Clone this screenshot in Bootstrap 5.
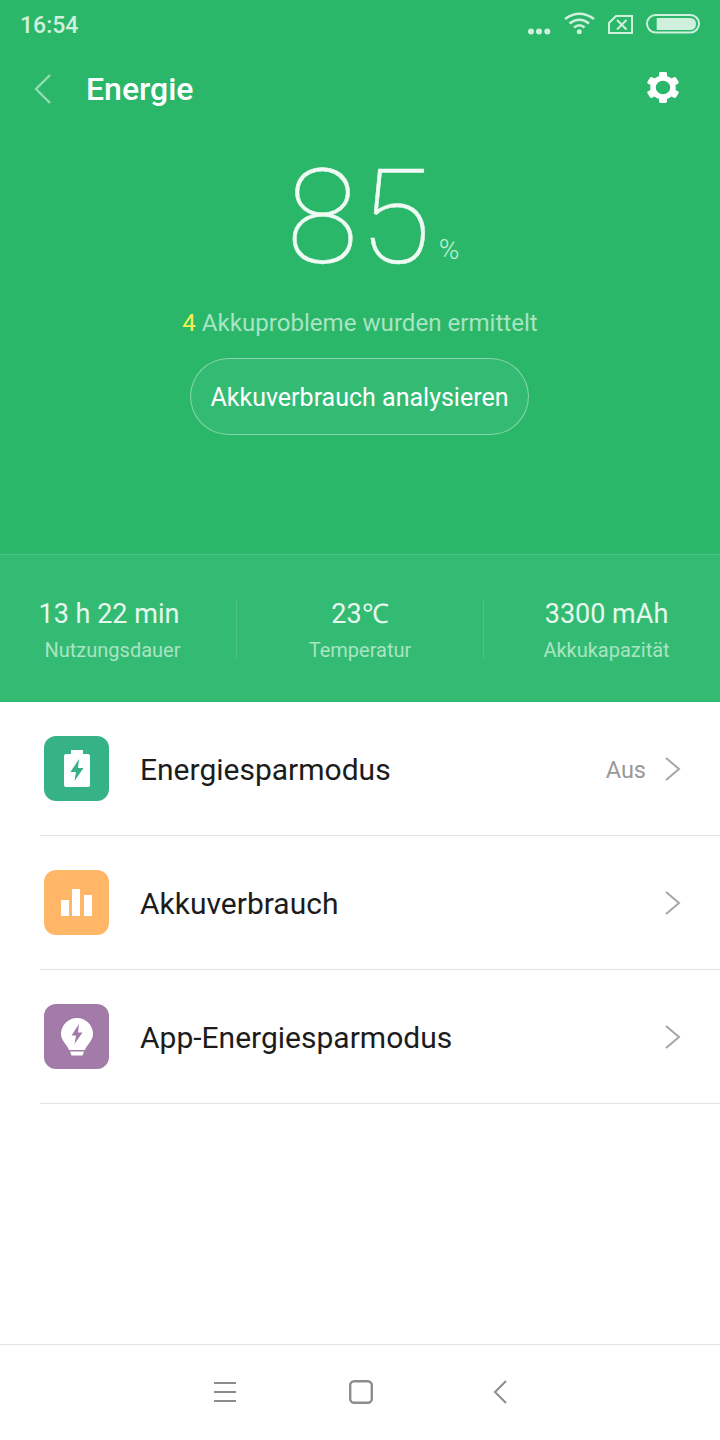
<!doctype html>
<html lang="de">
<head>
    <meta charset="utf-8">
    <title>Energie</title>
    <link href="https://cdn.jsdelivr.net/npm/bootstrap@5.3.3/dist/css/bootstrap.min.css" rel="stylesheet">
    <style>
        body {
            width: 720px;
            height: 1440px;
            overflow: hidden;
            background-color: #fff;
            font-family: Roboto, "Liberation Sans", sans-serif;
        }
        .hero {
            height: 554px;
            background-color: #2ab769;
            color: #fff;
        }
        .status-bar {
            height: 50px;
            padding: 0 20px 0 20px;
        }
        .status-time {
            font-size: 23px;
            font-weight: 500;
            color: #d0f0de;
            margin-top: 2px;
        }
        .title-bar {
            height: 78px;
            padding: 0 40px 0 33px;
        }
        .page-title {
            font-size: 32px;
            font-weight: 500;
            margin-left: 33px;
        }
        .gear-icon {
            margin-top: -3px;
        }
        .level-row {
            height: 162px;
            padding-left: 26px;
        }
        .level-num {
            font-size: 131px;
            font-weight: 100;
            line-height: 142px;
            letter-spacing: 1px;
            margin-bottom: 1px;
            color: #eefaf3;
            -webkit-text-stroke: .5px #eefaf3;
        }
        .level-unit {
            font-size: 28px;
            font-weight: 300;
            color: #c4eed6;
            margin-left: 7px;
            margin-bottom: 19px;
        }
        .problems {
            margin-top: 17px;
            font-size: 24.1px;
            line-height: 32px;
            color: #a9e4c3;
        }
        .problems b {
            font-weight: 400;
            color: #f5f04f;
        }
        .analyze-btn {
            display: block;
            width: 339px;
            height: 77px;
            margin: 19px 0 0 190px;
            padding: 2px 0 0;
            border: 1px solid rgba(255, 255, 255, .4);
            border-radius: 39px;
            background-color: #34bb73;
            color: #fff;
            font-size: 25px;
        }
        .stats {
            height: 148px;
            background-color: #34bb73;
            border-top: 1px solid #4ac384;
            color: #e6f8ee;
        }
        .stat-cell {
            height: 60px;
            line-height: 1;
        }
        .stat-first { width: 237px; padding-right: 18px; border-right: 1px solid #4ac384; }
        .stat-first .stat-label { padding-left: 7px; }
        .stat-mid { width: 247px; border-right: 1px solid #4ac384; }
        .stat-last { width: 236px; padding-left: 9px; }
        .stat-value {
            font-size: 27px;
            line-height: 30px;
        }
        .stat-label {
            font-size: 20px;
            line-height: 26px;
            margin-top: 8px;
            color: #a9e4c3;
        }
        .menu-row {
            height: 134px;
            margin-left: 40px;
            border-bottom: 1px solid #e3e3e3;
            padding-right: 39px;
        }
        .menu-icon {
            width: 65px;
            height: 65px;
            margin-left: 4px;
            margin-right: 31px;
            border-radius: 12px;
        }
        .icon-green { background-color: #36b386; }
        .icon-orange { background-color: #ffb767; }
        .icon-purple { background-color: #a27ba9; }
        .menu-label {
            font-size: 30px;
            color: #1c1c1c;
            padding-top: 2px;
        }
        .menu-value {
            font-size: 23.5px;
            color: #999;
            margin-right: 19px;
            padding-top: 4px;
        }
        .spacer {
            flex: 1;
        }
        .nav-bottom {
            height: 96px;
            border-top: 1px solid #e3e3e3;
            padding-left: 213px;
            padding-bottom: 2px;
            gap: 112px;
        }
        .nav-back {
            margin-left: 8px;
        }
    </style>
</head>
<body class="d-flex flex-column">

<div class="hero">
    <div class="status-bar d-flex justify-content-between align-items-center">
        <span class="status-time">16:54</span>
        <svg width="174" height="26" viewBox="0 0 174 26" fill="none" stroke="#d0f0de">
            <circle cx="5" cy="19.500" r="3" fill="#d0f0de" stroke="none"/>
            <circle cx="13" cy="19.500" r="3" fill="#d0f0de" stroke="none"/>
            <circle cx="21.300" cy="19.500" r="3" fill="#d0f0de" stroke="none"/>
            <path d="M39 7 Q53.500 -3.500 68 7 M43.500 11.500 Q53.500 4 63 11.500 M48 15.500 Q53.500 11 58.500 15.500" stroke-width="2.600"/>
            <circle cx="53.300" cy="19.700" r="2.500" fill="#d0f0de" stroke="none"/>
            <path d="M83 11 L90 4 H106 V21 H83 Z" stroke-width="2"/>
            <path d="M91 8 L100.500 17.500 M100.500 8 L91 17.500" stroke-width="2"/>
            <rect x="121" y="3" width="52" height="17.500" rx="8.700" stroke-width="2"/>
            <path d="M130.700 6 H164 Q170 6 170 12 Q170 18 164 18 H130.700 Z" fill="#d0f0de" stroke="none"/>
        </svg>
    </div>
    <div class="title-bar d-flex align-items-center">
        <svg width="20" height="32" viewBox="0 0 20 32" fill="none" stroke="#92dcb4" stroke-width="2.400">
            <path d="M17 2 L3 16 L17 30"/>
        </svg>
        <span class="page-title flex-grow-1">Energie</span>
        <svg class="gear-icon" width="34" height="31" viewBox="0 0 34 33" preserveAspectRatio="none">
            <circle cx="17" cy="16.500" r="10" fill="none" stroke="#fff" stroke-width="5.500"/>
            <g fill="#fff">
                <rect x="13" y="0" width="8" height="6" rx="1.500"/>
                <rect x="13" y="0" width="8" height="6" rx="1.500" transform="rotate(60 17 16.500)"/>
                <rect x="13" y="0" width="8" height="6" rx="1.500" transform="rotate(120 17 16.500)"/>
                <rect x="13" y="0" width="8" height="6" rx="1.500" transform="rotate(180 17 16.500)"/>
                <rect x="13" y="0" width="8" height="6" rx="1.500" transform="rotate(240 17 16.500)"/>
                <rect x="13" y="0" width="8" height="6" rx="1.500" transform="rotate(300 17 16.500)"/>
            </g>
        </svg>
    </div>
    <div class="level-row d-flex justify-content-center align-items-end">
        <span class="level-num">85</span>
        <span class="level-unit">%</span>
    </div>
    <div class="problems text-center"><b>4</b> Akkuprobleme wurden ermittelt</div>
    <button type="button" class="analyze-btn">Akkuverbrauch analysieren</button>
</div>

<div class="stats d-flex align-items-center">
    <div class="stat-cell stat-first text-center">
        <div class="stat-value">13 h 22 min</div>
        <div class="stat-label">Nutzungsdauer</div>
    </div>
    <div class="stat-cell stat-mid text-center">
        <div class="stat-value">23℃</div>
        <div class="stat-label">Temperatur</div>
    </div>
    <div class="stat-cell stat-last text-center">
        <div class="stat-value">3300 mAh</div>
        <div class="stat-label">Akkukapazität</div>
    </div>
</div>

<div class="menu-row d-flex align-items-center">
    <div class="menu-icon icon-green d-flex align-items-center justify-content-center">
        <svg width="26" height="37" viewBox="0 0 26 37">
            <path fill="#fff" d="M7 0 H19 V4 H24 Q26 4 26 6 V35 Q26 37 24 37 H2 Q0 37 0 35 V6 Q0 4 2 4 H7 Z"/>
            <path fill="#36b386" d="M15 9 L6.500 22 H12 L10.500 31 L19.500 18 H14 Z"/>
        </svg>
    </div>
    <span class="menu-label flex-grow-1">Energiesparmodus</span>
    <span class="menu-value">Aus</span>
    <svg width="16" height="26" viewBox="0 0 16 26" fill="none" stroke="#a6a6a6" stroke-width="2"><path d="M1 2 L14 13 L1 24"/></svg>
</div>
<div class="menu-row d-flex align-items-center">
    <div class="menu-icon icon-orange d-flex align-items-center justify-content-center">
        <svg width="31" height="27" viewBox="0 0 31 27" fill="#fff">
            <rect x="0" y="11" width="8" height="16"/>
            <rect x="11" y="0" width="8" height="27"/>
            <rect x="23" y="6" width="8" height="21"/>
        </svg>
    </div>
    <span class="menu-label flex-grow-1">Akkuverbrauch</span>
    <svg width="16" height="26" viewBox="0 0 16 26" fill="none" stroke="#a6a6a6" stroke-width="2"><path d="M1 2 L14 13 L1 24"/></svg>
</div>
<div class="menu-row d-flex align-items-center">
    <div class="menu-icon icon-purple d-flex align-items-center justify-content-center">
        <svg width="32" height="38" viewBox="0 0 32 38">
            <path fill="#fff" d="M16 0 A16 16 0 0 1 32 16 C32 23 26 26 24 32 H8 C6 26 0 23 0 16 A16 16 0 0 1 16 0 Z"/>
            <path fill="#fff" d="M9 33.500 H23 L21.500 37.500 H10.500 Z"/>
            <path fill="#a27ba9" d="M18 6 L10.500 17.500 H15 L13.500 26 L21.500 14.500 H17 Z"/>
        </svg>
    </div>
    <span class="menu-label flex-grow-1">App-Energiesparmodus</span>
    <svg width="16" height="26" viewBox="0 0 16 26" fill="none" stroke="#a6a6a6" stroke-width="2"><path d="M1 2 L14 13 L1 24"/></svg>
</div>

<div class="spacer"></div>

<div class="nav-bottom d-flex align-items-center">
    <svg width="24" height="22" viewBox="0 0 24 22" stroke="#8c8c8c" stroke-width="2"><path d="M1 2 H23 M1 11 H23 M1 20 H23"/></svg>
    <svg width="24" height="24" viewBox="0 0 24 24" fill="none" stroke="#8c8c8c" stroke-width="2.400"><rect x="1.200" y="1.200" width="21.600" height="21.600" rx="4"/></svg>
    <svg class="nav-back" width="14" height="24" viewBox="0 0 14 24" fill="none" stroke="#8c8c8c" stroke-width="2"><path d="M13 1 L2 12 L13 23"/></svg>
</div>

<script src="https://cdn.jsdelivr.net/npm/bootstrap@5.3.3/dist/js/bootstrap.bundle.min.js"></script>
</body>
</html>
